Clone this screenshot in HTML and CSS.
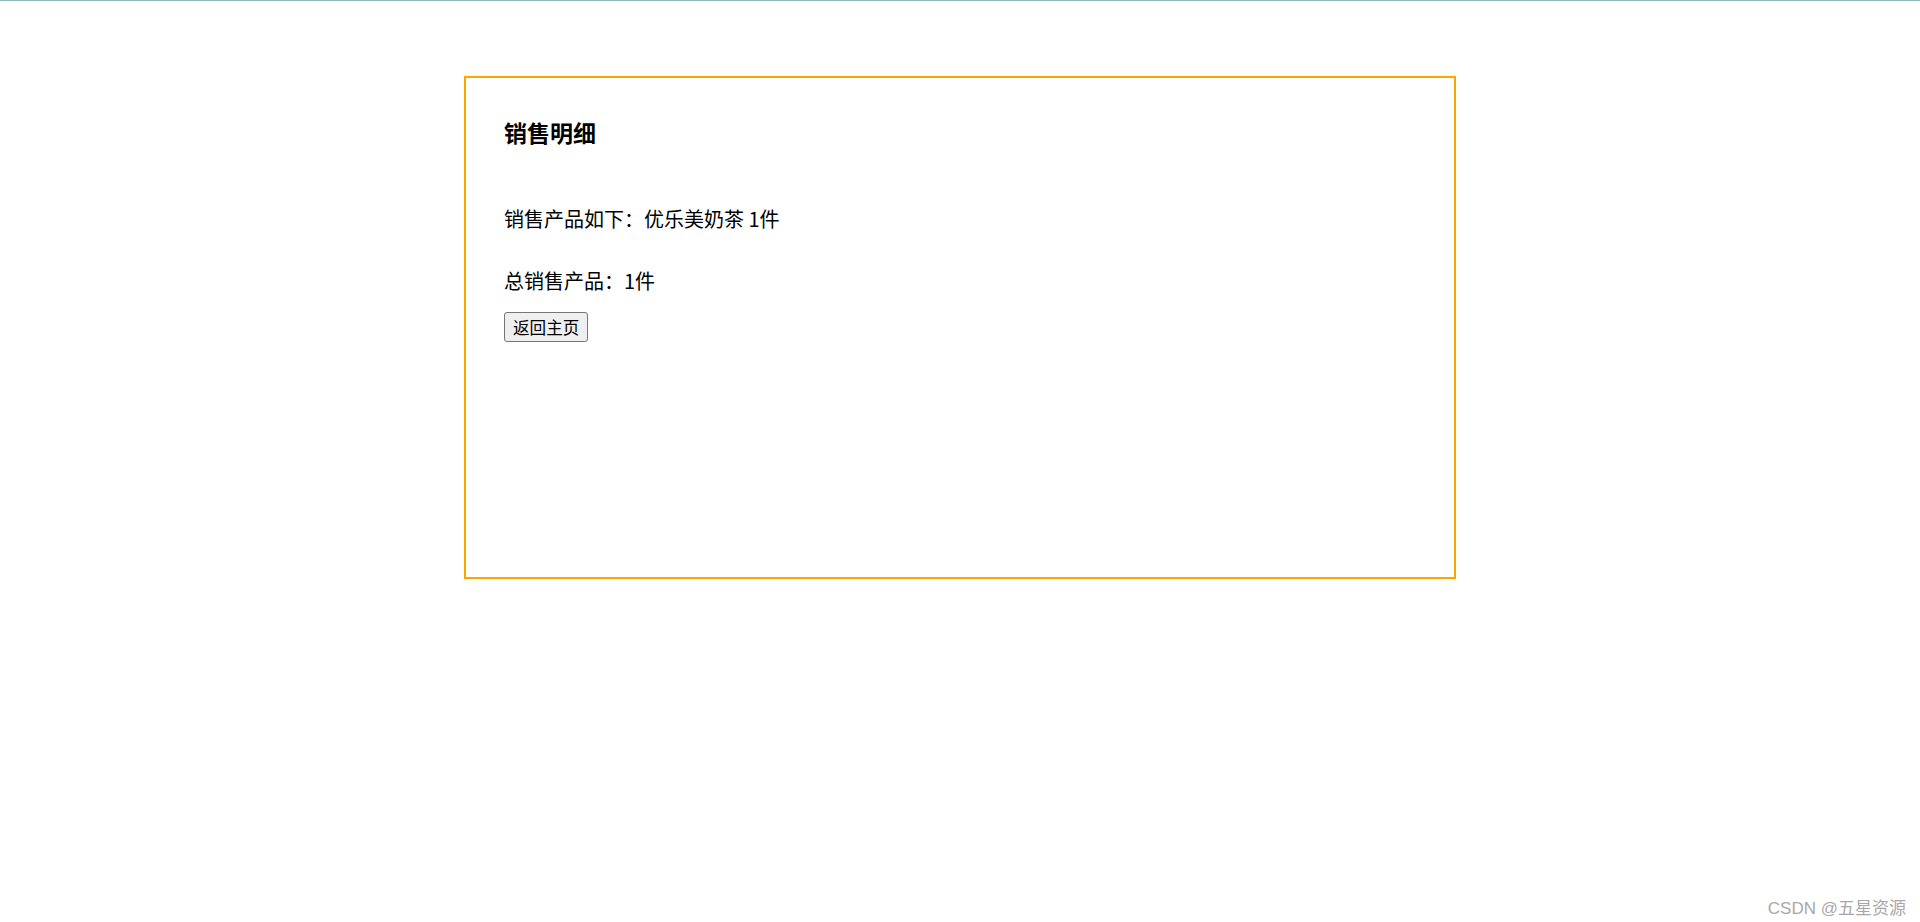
FILE: index.html
```html
<!DOCTYPE html>
<html>
<head>
  <meta charset="utf-8">
  <title>销售明细</title>
  <link rel="stylesheet" href="styles.css">
</head>
<body>
  <div class="topline"></div>

  <div class="sales">
    <h3>销售明细</h3>
    <p>销售产品如下：优乐美奶茶 1件</p>
    <p class="total">总销售产品：1件</p>
    <button onclick="goHome()">返回主页</button>
  </div>

  <div class="mark">CSDN @五星资源</div>

  <script>
    function goHome() {
      location.href = 'index.html';
    }
  </script>
</body>
</html>
```

FILE: styles.css
```css
body {
  margin: 0;
  font-family: "Noto Sans CJK SC", sans-serif;
  color: #000;
  background: #fff;
}
.topline {
  height: 1px;
  background: #8fb8bc;
}
.sales {
  box-sizing: border-box;
  width: 992px;
  height: 503px;
  margin: 75px auto 0;
  padding: 0 38px;
  border: 2px solid #ffa500;
}
.sales h3 {
  margin: 39px 0 0;
  font-size: 23px;
  line-height: 30px;
  font-weight: bold;
}
.sales p {
  margin: 57px 0 0;
  font-size: 20px;
  line-height: 30px;
}
.sales p.total {
  margin-top: 32px;
}
button {
  display: block;
  margin-top: 16px;
  height: 30px;
  padding: 0 8px;
  font-family: "Noto Sans CJK SC", sans-serif;
  font-size: 16.6px;
  line-height: 26px;
  color: #000;
  background: #efefef;
  border: 1px solid #767676;
  border-radius: 3px;
}
.mark {
  position: absolute;
  right: 14px;
  bottom: 3px;
  font-family: "Liberation Sans", "Noto Sans CJK SC", sans-serif;
  font-size: 17px;
  color: #a8a8a8;
}
```
